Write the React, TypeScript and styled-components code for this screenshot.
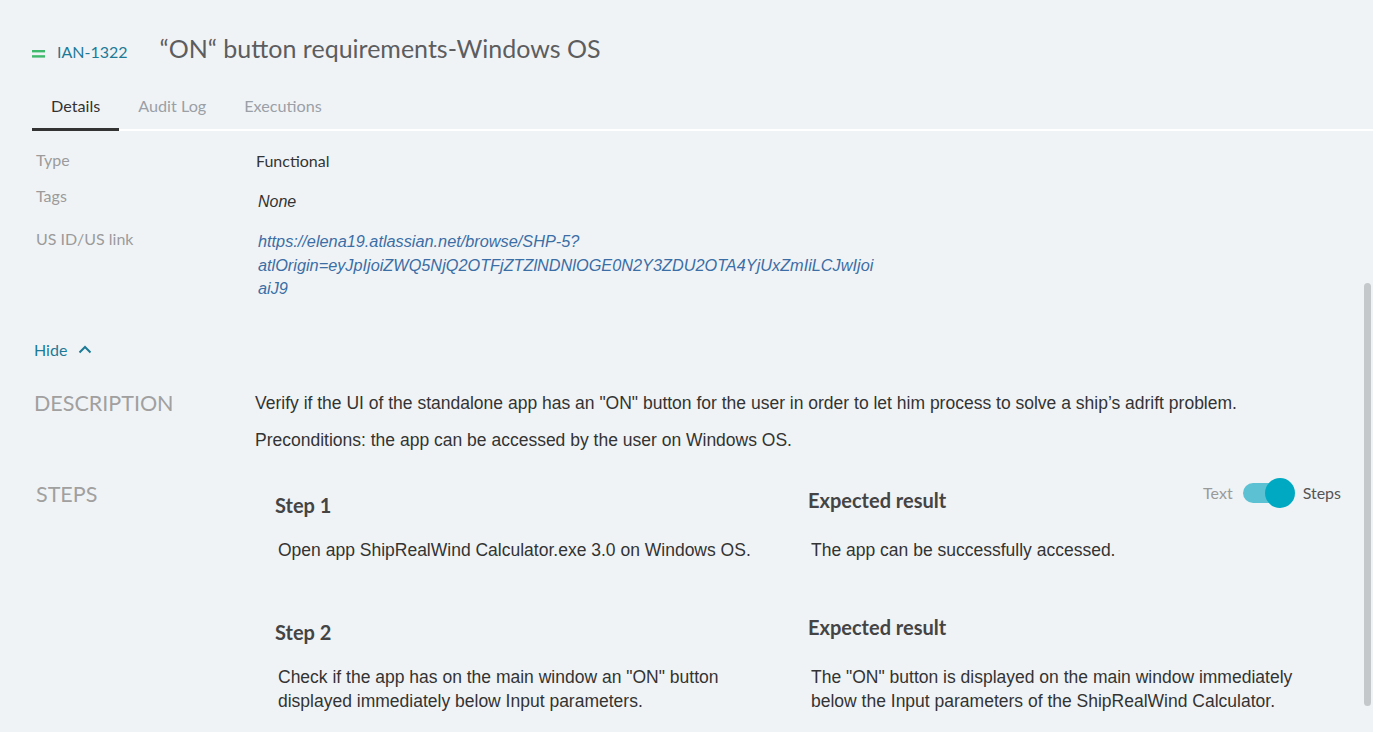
import React from 'react'
import styled, { createGlobalStyle } from 'styled-components'

const GlobalStyle = createGlobalStyle`
  html, body {
    margin: 0;
    padding: 0;
    background: #f0f3f6;
    overflow: hidden;
  }
  body {
    font-family: Lato, "Liberation Sans", sans-serif;
    color: #333;
  }
`

const Page = styled.div`
  position: relative;
  min-height: 100vh;
  padding-bottom: 40px;
`

const Header = styled.div`
  display: flex;
  align-items: baseline;
  padding: 32px 0 2px 32px;
`

const IssueKey = styled.div`
  display: flex;
  align-items: baseline;
  gap: 12px;
  font-size: 16px;
  color: #1d7a96;
  margin-right: 32px;
`

const Title = styled.h1`
  margin: 0;
  font-size: 25px;
  font-weight: 400;
  line-height: 32px;
  color: #5c5d5f;
`

const TabBar = styled.div`
  display: flex;
  margin: 19px 0 0 32px;
  border-bottom: 2px solid #ffffff;
`

const Tab = styled.div<{ $active?: boolean }>`
  padding: 10px 19px 11px;
  line-height: 22px;
  font-size: 16.2px;
  color: ${(p) => (p.$active ? '#333' : '#9aa0a6')};
  border-bottom: 3px solid ${(p) => (p.$active ? '#333' : 'transparent')};
  margin-bottom: -2px;
`

const Body = styled.div`
  padding: 18px 0 0 36px;
`

const FieldRow = styled.div<{ $gap: number }>`
  display: grid;
  grid-template-columns: 220px 1fr;
  margin-bottom: ${(p) => p.$gap}px;
`

const FieldLabel = styled.div`
  font-size: 16px;
  line-height: 22px;
  color: #9b9b9b;
`

const FieldValue = styled.div<{ $drop?: number }>`
  font-size: 16px;
  line-height: 22px;
  padding-top: ${(p) => p.$drop || 0}px;
  color: #333;
`

const Italic = styled.span`
  padding-left: 2px;
  font-family: "Liberation Sans", Arial, sans-serif;
  font-style: italic;
  font-size: 16px;
`

const Link = styled.a`
  display: block;
  padding-left: 2px;
  font-family: "Liberation Sans", Arial, sans-serif;
  font-style: italic;
  font-size: 16.3px;
  line-height: 23.5px;
  color: #3b6ea5;
  text-decoration: none;
`

const HideToggle = styled.div`
  display: flex;
  align-items: center;
  gap: 11px;
  margin: 38px 0 0 -2px;
  font-size: 16px;
  line-height: 22px;
  color: #1d7a96;
`

const Section = styled.div<{ $top: number; $labelWidth: number }>`
  display: grid;
  grid-template-columns: ${(p) => p.$labelWidth}px 1fr;
  margin-top: ${(p) => p.$top}px;
`

const SectionTitle = styled.div<{ $shift?: number }>`
  font-size: 21.5px;
  line-height: 28px;
  color: #a0a0a0;
  text-transform: uppercase;
  margin-left: ${(p) => p.$shift || 0}px;
`

const SectionContent = styled.div<{ $drop: number }>`
  padding-top: ${(p) => p.$drop}px;
`

const Paragraph = styled.p`
  margin: 0 0 13px;
  font-family: "Liberation Sans", Arial, sans-serif;
  font-size: 17.5px;
  line-height: 24px;
  color: #333;
`

const StepRow = styled.div<{ $gap: number }>`
  display: grid;
  grid-template-columns: 533px 1fr auto;
  margin-bottom: ${(p) => p.$gap}px;
`

const StepCell = styled.div``

const StepHeading = styled.div<{ $drop: number }>`
  box-sizing: border-box;
  height: 52px;
  padding-top: ${(p) => p.$drop}px;
  font-size: 20px;
  font-weight: 700;
  line-height: 28px;
  color: #444;
`

const StepText = styled.div<{ $width: number }>`
  max-width: ${(p) => p.$width}px;
  padding-left: 3px;
  font-family: "Liberation Sans", Arial, sans-serif;
  font-size: 17.5px;
  line-height: 24px;
  color: #333;
`

const ModeSwitch = styled.div`
  display: flex;
  align-items: center;
  margin: -8px 32px 0 0;
  height: 30px;
  font-size: 16px;
`

const SwitchLabel = styled.span<{ $on?: boolean }>`
  color: ${(p) => (p.$on ? '#555' : '#9a9a9a')};
`

const Track = styled.div`
  position: relative;
  width: 48px;
  height: 20px;
  margin: 0 12px 0 10px;
  border-radius: 10px;
  background: #5cc2d3;
`

const Thumb = styled.div`
  position: absolute;
  top: -5px;
  right: -4px;
  width: 30px;
  height: 30px;
  border-radius: 50%;
  background: #00a9c2;
`

const ScrollThumb = styled.div`
  position: absolute;
  top: 283px;
  right: 2px;
  width: 7px;
  height: 423px;
  border-radius: 4px;
  background: #c5c8cb;
`

const IssueIcon = () => (
  <svg width="13" height="8" viewBox="0 0 13 8">
    <rect x="0" y="0" width="13" height="2.4" fill="#3fb96c" />
    <rect x="0" y="5.2" width="13" height="2.4" fill="#3fb96c" />
  </svg>
)

const ChevronUp = () => (
  <svg width="14" height="9" viewBox="0 0 14 9">
    <polyline points="1.5,7.5 7,2 12.5,7.5" fill="none" stroke="#1d7a96" strokeWidth="2" />
  </svg>
)

const steps = [
  {
    title: 'Step 1',
    action: 'Open app ShipRealWind Calculator.exe 3.0 on Windows OS.',
    result: 'The app can be successfully accessed.',
  },
  {
    title: 'Step 2',
    action: 'Check if the app has on the main window an "ON" button displayed immediately below Input parameters.',
    result: 'The "ON" button is displayed on the main window immediately below the Input parameters of the ShipRealWind Calculator.',
  },
]

const App: React.FC = () => (
  <Page>
    <GlobalStyle />
    <Header>
      <IssueKey>
        <IssueIcon />
        IAN-1322
      </IssueKey>
      <Title>“ON“ button requirements-Windows OS</Title>
    </Header>

    <TabBar>
      <Tab $active>Details</Tab>
      <Tab>Audit Log</Tab>
      <Tab>Executions</Tab>
    </TabBar>

    <Body>
      <FieldRow $gap={13}>
        <FieldLabel>Type</FieldLabel>
        <FieldValue $drop={1}>Functional</FieldValue>
      </FieldRow>
      <FieldRow $gap={15}>
        <FieldLabel>Tags</FieldLabel>
        <FieldValue $drop={5}>
          <Italic>None</Italic>
        </FieldValue>
      </FieldRow>
      <FieldRow $gap={0}>
        <FieldLabel>US ID/US link</FieldLabel>
        <FieldValue $drop={2}>
          <Link href="#">
            https://elena19.atlassian.net/browse/SHP-5?
            <br />
            atlOrigin=eyJpIjoiZWQ5NjQ2OTFjZTZlNDNlOGE0N2Y3ZDU2OTA4YjUxZmIiLCJwIjoi
            <br />
            aiJ9
          </Link>
        </FieldValue>
      </FieldRow>

      <HideToggle>
        Hide
        <ChevronUp />
      </HideToggle>

      <Section $top={28} $labelWidth={219}>
        <SectionTitle $shift={-2}>Description</SectionTitle>
        <SectionContent $drop={2}>
          <Paragraph>
            Verify if the UI of the standalone app has an "ON" button for the user in order to let him process to solve a
            ship’s adrift problem.
          </Paragraph>
          <Paragraph>Preconditions: the app can be accessed by the user on Windows OS.</Paragraph>
        </SectionContent>
      </Section>

      <Section $top={15} $labelWidth={239}>
        <SectionTitle>Steps</SectionTitle>
        <SectionContent $drop={6}>
          {steps.map((s, i) => (
            <StepRow key={s.title} $gap={51}>
              <StepCell>
                <StepHeading $drop={5}>{s.title}</StepHeading>
                <StepText $width={480}>{s.action}</StepText>
              </StepCell>
              <StepCell>
                <StepHeading $drop={0}>Expected result</StepHeading>
                <StepText $width={500}>{s.result}</StepText>
              </StepCell>
              {i === 0 ? (
                <ModeSwitch>
                  <SwitchLabel>Text</SwitchLabel>
                  <Track>
                    <Thumb />
                  </Track>
                  <SwitchLabel $on>Steps</SwitchLabel>
                </ModeSwitch>
              ) : (
                <div />
              )}
            </StepRow>
          ))}
        </SectionContent>
      </Section>
    </Body>

    <ScrollThumb />
  </Page>
)

export default App
